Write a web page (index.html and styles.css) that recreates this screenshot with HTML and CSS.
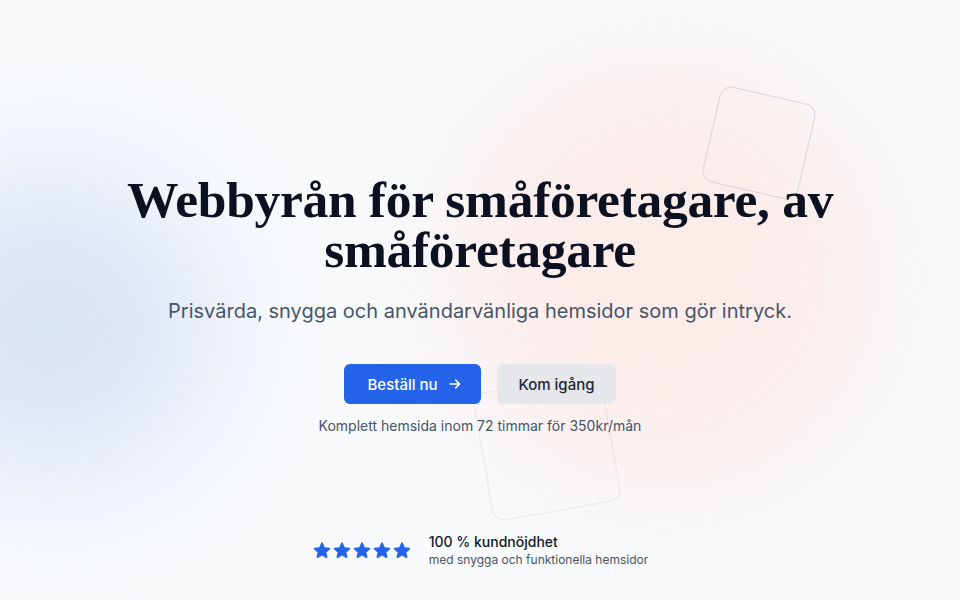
FILE: index.html
```html
<!DOCTYPE html>
<html lang="sv">
<head>
<meta charset="utf-8">
<title>Webbyrå för småföretagare</title>
<link rel="stylesheet" href="styles.css">
</head>
<body>
<main class="hero">
  <div class="blob blob-blue"></div>
  <div class="blob blob-peach"></div>
  <div class="deco deco-top"></div>
  <div class="deco deco-bottom"></div>

  <section class="content">
    <h1 class="title">Webbyrån för småföretagare, av småföretagare</h1>
    <p class="lead">Prisvärda, snygga och användarvänliga hemsidor som gör intryck.</p>
    <div class="actions">
      <a class="btn btn-primary" href="#">Beställ nu
        <svg class="arrow" viewBox="0 0 16 16" width="14" height="14" aria-hidden="true"><path d="M2.5 8h10.5M8.8 3.6 13.2 8l-4.4 4.4" fill="none" stroke="currentColor" stroke-width="1.7" stroke-linecap="round" stroke-linejoin="round"/></svg>
      </a>
      <a class="btn btn-secondary" href="#">Kom igång</a>
    </div>
    <p class="note">Komplett hemsida inom 72 timmar för 350kr/mån</p>
  </section>

  <section class="rating">
    <div class="stars">
      <svg viewBox="0 0 20 20" class="star"><path d="M10.868 2.884c-.321-.772-1.415-.772-1.736 0l-1.83 4.401-4.753.381c-.833.067-1.171 1.107-.536 1.651l3.62 3.102-1.106 4.637c-.194.813.691 1.456 1.405 1.02L10 15.591l4.069 2.485c.713.436 1.598-.207 1.404-1.020l-1.106-4.637 3.62-3.102c.635-.544.297-1.584-.536-1.65l-4.752-.382-1.831-4.401Z"/></svg>
      <svg viewBox="0 0 20 20" class="star"><path d="M10.868 2.884c-.321-.772-1.415-.772-1.736 0l-1.83 4.401-4.753.381c-.833.067-1.171 1.107-.536 1.651l3.62 3.102-1.106 4.637c-.194.813.691 1.456 1.405 1.02L10 15.591l4.069 2.485c.713.436 1.598-.207 1.404-1.020l-1.106-4.637 3.62-3.102c.635-.544.297-1.584-.536-1.65l-4.752-.382-1.831-4.401Z"/></svg>
      <svg viewBox="0 0 20 20" class="star"><path d="M10.868 2.884c-.321-.772-1.415-.772-1.736 0l-1.83 4.401-4.753.381c-.833.067-1.171 1.107-.536 1.651l3.62 3.102-1.106 4.637c-.194.813.691 1.456 1.405 1.02L10 15.591l4.069 2.485c.713.436 1.598-.207 1.404-1.020l-1.106-4.637 3.62-3.102c.635-.544.297-1.584-.536-1.65l-4.752-.382-1.831-4.401Z"/></svg>
      <svg viewBox="0 0 20 20" class="star"><path d="M10.868 2.884c-.321-.772-1.415-.772-1.736 0l-1.83 4.401-4.753.381c-.833.067-1.171 1.107-.536 1.651l3.62 3.102-1.106 4.637c-.194.813.691 1.456 1.405 1.02L10 15.591l4.069 2.485c.713.436 1.598-.207 1.404-1.020l-1.106-4.637 3.62-3.102c.635-.544.297-1.584-.536-1.65l-4.752-.382-1.831-4.401Z"/></svg>
      <svg viewBox="0 0 20 20" class="star"><path d="M10.868 2.884c-.321-.772-1.415-.772-1.736 0l-1.83 4.401-4.753.381c-.833.067-1.171 1.107-.536 1.651l3.62 3.102-1.106 4.637c-.194.813.691 1.456 1.405 1.02L10 15.591l4.069 2.485c.713.436 1.598-.207 1.404-1.020l-1.106-4.637 3.62-3.102c.635-.544.297-1.584-.536-1.65l-4.752-.382-1.831-4.401Z"/></svg>
    </div>
    <div class="rating-text">
      <p class="rating-title">100 % kundnöjdhet</p>
      <p class="rating-sub">med snygga och funktionella hemsidor</p>
    </div>
  </section>
</main>
</body>
</html>
```

FILE: styles.css
```css
* { box-sizing: border-box; }

html, body {
  margin: 0;
  padding: 0;
  height: 100%;
}

body {
  background: #f8fafc;
  font-family: Inter, "Noto Sans", "Liberation Sans", sans-serif;
  color: #0f172a;
  overflow: hidden;
}

.hero {
  position: relative;
  height: 600px;
  overflow: hidden;
  display: flex;
  flex-direction: column;
  align-items: center;
  padding-top: 175px;
}

.blob {
  position: absolute;
  border-radius: 50%;
  filter: blur(60px);
  z-index: 0;
}

.blob-blue {
  width: 320px;
  height: 300px;
  left: -110px;
  top: 175px;
  background: rgba(205, 218, 245, 0.7);
}

.blob-peach {
  width: 420px;
  height: 420px;
  left: 455px;
  top: 65px;
  background: rgba(252, 233, 229, 0.8);
}

.deco {
  position: absolute;
  border: 1px solid rgba(148, 163, 184, 0.35);
  border-radius: 12px;
  z-index: 0;
}

.deco-top {
  width: 98px;
  height: 98px;
  left: 710px;
  top: 94px;
  transform: rotate(13deg);
}

.deco-bottom {
  width: 130px;
  height: 130px;
  left: 482px;
  top: 382px;
  transform: rotate(-10deg);
  border-color: rgba(148, 163, 184, 0.18);
}

.content {
  position: relative;
  z-index: 1;
  display: flex;
  flex-direction: column;
  align-items: center;
  text-align: center;
  max-width: 760px;
}

.title {
  margin: 0;
  font-family: "Liberation Serif", "DejaVu Serif", serif;
  font-weight: 700;
  font-size: 51.5px;
  line-height: 50px;
  letter-spacing: -0.3px;
  color: #0b1120;
}

.lead {
  margin: 22px 0 0;
  font-size: 20px;
  line-height: 28px;
  color: #475569;
}

.actions {
  display: flex;
  gap: 16px;
  margin-top: 39px;
}

.btn {
  display: inline-flex;
  align-items: center;
  justify-content: center;
  height: 40px;
  border-radius: 6px;
  font-size: 15px;
  font-weight: 500;
  text-decoration: none;
}

.btn-primary {
  width: 137px;
  gap: 10px;
  padding-left: 4px;
  background: #2563eb;
  color: #ffffff;
}

.btn-secondary {
  width: 119px;
  background: #e5e7eb;
  color: #1f2937;
}

.arrow { display: block; }

.note {
  margin: 12px 0 0;
  font-size: 14px;
  line-height: 20px;
  color: #475569;
}

.rating {
  position: relative;
  z-index: 1;
  display: flex;
  align-items: center;
  gap: 17px;
  margin-top: 96px;
}

.stars {
  display: flex;
  gap: 0;
}

.star {
  width: 20px;
  height: 20px;
  fill: #2563eb;
  display: block;
}

.rating-text p { margin: 0; }

.rating-title {
  font-size: 14px;
  line-height: 19px;
  font-weight: 500;
  color: #0f172a;
}

.rating-sub {
  font-size: 12px;
  line-height: 17px;
  color: #4b5563;
  margin-top: 1px;
}
```
